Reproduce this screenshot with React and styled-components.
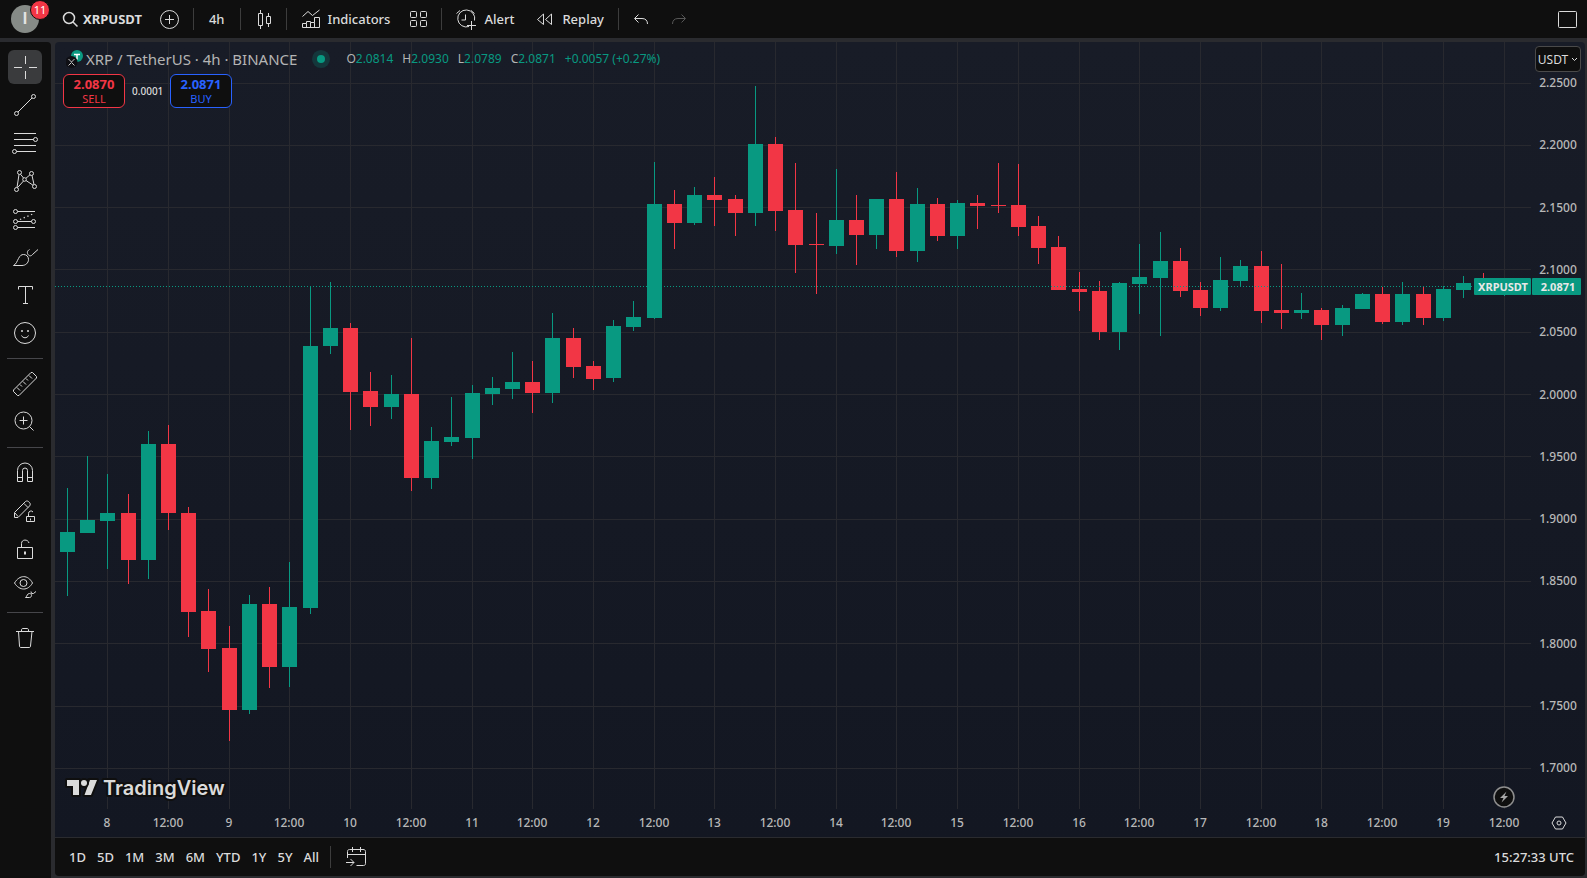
import React, { useLayoutEffect, useRef, useState } from "react";
import styled, { createGlobalStyle } from "styled-components";

const GlobalStyle = createGlobalStyle`
  * { box-sizing: border-box; }
  body {
    margin: 0;
    background: #2a2b2f;
    color: #dbdbdb;
    font-family: "Noto Sans", "Open Sans", sans-serif;
    font-size: 13px;
  }
  button { font: inherit; color: inherit; background: none; border: 0; padding: 0; margin: 0; cursor: pointer; }
`;

const UP = "#089981";
const DOWN = "#f23645";

/* ---------- layout ---------- */

const Page = styled.div`
  display: flex;
  flex-direction: column;
  gap: 4px;
  height: 100vh;
  min-height: 720px;
`;

const TopBar = styled.header`
  display: flex;
  align-items: center;
  flex: none;
  height: 38px;
  background: #0f0f0f;
`;

const Body = styled.div`
  display: flex;
  gap: 4px;
  flex: 1;
  min-height: 0;
`;

const SideBar = styled.nav`
  display: flex;
  flex-direction: column;
  align-items: center;
  flex: none;
  width: 51px;
  padding: 6px 1px 0 0;
  background: #0f0f0f;
  border-top-right-radius: 4px;
`;

const Main = styled.main`
  display: flex;
  flex-direction: column;
  flex: 1;
  min-width: 0;
  margin: 0 2px 2px 0;
  border-radius: 4px;
  overflow: hidden;
`;

const ChartFrame = styled.section`
  display: grid;
  grid-template: minmax(0, 1fr) / minmax(0, 1fr);
  flex: 1;
  min-height: 0;
  background: linear-gradient(#181c27, #131722);
  & > * { grid-area: 1 / 1; }
`;

const BottomBar = styled.footer`
  display: flex;
  align-items: center;
  flex: none;
  height: 39px;
  padding: 0 11px 0 14px;
  background: #0f0f0f;
  border-top: 1px solid #2a2b2f;
`;

/* ---------- shared pieces ---------- */

const Glyph = styled.svg`
  display: block;
  flex: none;
  width: 28px;
  height: 28px;
  fill: none;
  stroke: currentColor;
  stroke-width: 1;
`;

const Icon = ({ children, ...rest }) => (
  <Glyph viewBox="0 0 28 28" aria-hidden="true" {...rest}>{children}</Glyph>
);

const VLine = styled.span`
  flex: none;
  width: 1px;
  height: 22px;
  margin: 0 ${(p) => p.$gap ?? 0}px;
  background: #3d3d3d;
`;

/* ---------- top bar ---------- */

const AvatarButton = styled.button`
  position: relative;
  display: flex;
  flex: none;
  align-items: center;
  justify-content: center;
  width: 28px;
  height: 28px;
  margin: 0 16px 0 11px;
  border-radius: 50%;
  background: #868b87;
  color: #e3e3e3;
  font: 700 16px "Liberation Sans", sans-serif;
`;

const Badge = styled.span`
  position: absolute;
  top: -5px;
  right: -11px;
  min-width: 20px;
  height: 20px;
  padding: 0 2px;
  border: 1px solid #0f0f0f;
  border-radius: 10px;
  background: ${DOWN};
  color: #fff;
  font: 11px/18px "Noto Sans", sans-serif;
  text-align: center;
`;

const BarButton = styled.button`
  display: flex;
  align-items: center;
  flex: none;
  gap: ${(p) => p.$gap || 0}px;
  height: 38px;
  padding: 0 ${(p) => p.$end ?? p.$pad ?? 0}px 0 ${(p) => p.$pad || 0}px;
  color: ${(p) => (p.$dim ? "#575757" : "#dbdbdb")};
  font-weight: ${(p) => (p.$bold ? 700 : 500)};
`;

const Spacer = styled.span`
  flex: 1;
`;

/* ---------- side bar ---------- */

const ToolButton = styled.button`
  display: flex;
  align-items: center;
  justify-content: center;
  flex: none;
  width: 34px;
  height: 34px;
  margin: 2px 0;
  border-radius: 6px;
  background: ${(p) => (p.$active ? "#3a3b3d" : "transparent")};
`;

const ToolRule = styled.hr`
  flex: none;
  width: 36px;
  height: 1px;
  margin: 6px 0;
  border: 0;
  background: #46464a;
`;

/* ---------- chart overlay ---------- */

const Plot = styled.svg`
  display: block;
  width: 100%;
  height: 100%;
  font-family: "Noto Sans", sans-serif;
  font-size: 12px;
`;

const Overlay = styled.div`
  display: flex;
  justify-content: space-between;
  align-items: flex-start;
  z-index: 1;
  padding: 4px 4px 0 8px;
`;

const Legend = styled.div`
  display: flex;
  flex-direction: column;
  gap: 3px;
`;

const LegendRow = styled.div`
  display: flex;
  align-items: center;
  height: 25px;
  padding-left: 3px;
  color: #b4b4b4;
  white-space: nowrap;
`;

const Coins = styled.svg`
  flex: none;
  width: 18px;
  height: 18px;
  margin-right: 2px;
`;

const Title = styled.h1`
  margin: 0;
  font-size: 15px;
  font-weight: 400;
  line-height: 24px;
`;

const Pulse = styled.span`
  flex: none;
  width: 8px;
  height: 8px;
  margin: 0 21px 0 20px;
  border-radius: 50%;
  background: ${UP};
  box-shadow: 0 0 0 5px #14373b;
`;

const Quotes = styled.dl`
  display: flex;
  gap: 9px;
  margin: 0;
  font-size: 12px;
`;

const Quote = styled.div`
  display: flex;
  dt, dd { margin: 0; }
  dd { color: ${UP}; }
`;

const Trade = styled.div`
  display: flex;
  align-items: center;
  gap: 7px;
`;

const TradeButton = styled.button`
  display: flex;
  flex-direction: column;
  align-items: center;
  justify-content: center;
  width: 62px;
  height: 34px;
  border: 1px solid ${(p) => p.$tone};
  border-radius: 6px;
  background: #0f0f0f;
  color: ${(p) => p.$tone};
  font-size: 11px;
  line-height: 14px;
  b { font-size: 13px; line-height: 15px; }
`;

const Spread = styled.span`
  width: 31px;
  font-size: 10px;
  font-weight: 500;
  text-align: center;
`;

const CurrencySelect = styled.button`
  display: flex;
  align-items: center;
  justify-content: center;
  gap: 3px;
  width: 46px;
  height: 26px;
  border: 1px solid #4a4a4a;
  border-radius: 4px;
  background: #0f0f0f;
  font-size: 12px;
  svg { width: 7px; height: 5px; fill: none; stroke: currentColor; }
`;

/* ---------- bottom bar ---------- */

const Ranges = styled.div`
  display: flex;
  gap: 11px;
`;

const RangeButton = styled.button`
  font-weight: 500;
  line-height: 20px;
`;

const Clock = styled(RangeButton)`
  margin-left: auto;
`;

/* ---------- data ---------- */

/* One row per 4h bar: up?, high, body top, body bottom, low.
   Levels are in plot units counted down from LEVEL_TOP. */
const LEVEL_TOP = 42;
const BARS = [
  [1, 488, 532, 552, 596], [1, 456, 520, 533, 533], [1, 474, 513, 521, 569], [0, 494, 513, 560, 584],
  [1, 431, 444, 560, 579], [0, 425, 444, 513, 530], [0, 507, 513, 612, 637], [0, 589, 611, 649, 672],
  [0, 626, 648, 710, 741], [1, 595, 604, 710, 714], [0, 587, 604, 667, 688], [1, 562, 607, 667, 687],
  [1, 286, 346, 608, 614], [1, 282, 328, 346, 354], [0, 323, 328, 392, 430], [0, 372, 391, 407, 426],
  [1, 375, 394, 407, 419], [0, 338, 394, 478, 491], [1, 427, 441, 478, 489], [1, 397, 437, 442, 446],
  [1, 385, 393, 438, 459], [1, 377, 388, 394, 405], [1, 352, 382, 389, 399], [0, 361, 382, 393, 413],
  [1, 313, 338, 393, 403], [0, 328, 338, 367, 378], [0, 361, 366, 379, 390], [1, 320, 326, 378, 382],
  [1, 301, 317, 327, 331], [1, 162, 204, 318, 319], [0, 190, 204, 223, 249], [1, 187, 195, 223, 225],
  [0, 177, 195, 200, 226], [0, 195, 199, 213, 236], [1, 86, 144, 213, 226], [0, 137, 144, 211, 231],
  [0, 163, 210, 245, 273], [0, 213, 244, 245, 294], [1, 169, 220, 246, 254], [0, 195, 220, 235, 265],
  [1, 199, 199, 235, 249], [0, 172, 199, 251, 257], [1, 188, 204, 251, 262], [0, 198, 204, 236, 241],
  [1, 200, 203, 236, 249], [0, 195, 203, 206, 229], [0, 163, 205, 206, 213], [0, 164, 205, 227, 236],
  [0, 216, 226, 248, 264], [0, 236, 247, 290, 290], [0, 272, 289, 292, 311], [0, 281, 291, 332, 340],
  [1, 282, 283, 332, 350], [1, 244, 277, 284, 314], [1, 232, 261, 278, 336], [0, 248, 261, 291, 297],
  [0, 282, 290, 308, 316], [1, 257, 280, 308, 311], [1, 260, 266, 281, 287], [0, 251, 266, 311, 323],
  [0, 264, 310, 313, 329], [1, 293, 310, 313, 319], [0, 308, 310, 325, 340], [1, 305, 308, 325, 336],
  [1, 293, 294, 309, 309], [0, 287, 294, 322, 324], [1, 282, 294, 322, 325], [0, 286, 294, 318, 325],
  [1, 286, 289, 318, 321], [1, 276, 283, 290, 298], [0, 273, 283, 290, 292], [1, 280, 283, 290, 296],
];

const PRICES = Array.from({ length: 12 }, (_, i) => (2.25 - i * 0.05).toFixed(4));
const TIMES = Array.from({ length: 24 }, (_, i) => (i % 2 ? "12:00" : String(8 + i / 2)));

const AXIS_W = 54;
const AXIS_H = 28;

/* ---------- chart ---------- */

function Chart() {
  const ref = useRef(null);
  const [size, setSize] = useState({ w: 1530, h: 795 });

  useLayoutEffect(() => {
    const el = ref.current;
    const read = () => {
      const r = el.getBoundingClientRect();
      setSize({ w: Math.round(r.width), h: Math.round(r.height) });
    };
    read();
    const watcher = new ResizeObserver(read);
    watcher.observe(el);
    return () => watcher.disconnect();
  }, []);

  const plotW = size.w - AXIS_W;
  const plotH = size.h - AXIS_H;
  const kx = plotW / 1476;
  const ky = plotH / 767;
  const x = (i) => Math.floor((12.32 + 20.235 * i) * kx);
  const y = (level) => Math.floor((level - LEVEL_TOP) * ky);
  const bodyHalf = Math.max(1, Math.floor(7 * kx));
  const priceY = (i) => (41 + i * 62.3) * ky;
  const lastY = y(286);

  return (
    <Plot ref={ref} role="img" aria-label="XRPUSDT 4h candlestick chart">
      <g fill="#28292f" shapeRendering="crispEdges">
        {TIMES.map((_, i) => <rect key={i} x={x(2 + i * 3)} y="0" width="1" height={plotH} />)}
        {PRICES.map((p, i) => <rect key={p} x="0" y={Math.floor(priceY(i))} width={plotW} height="1" />)}
      </g>
      <g shapeRendering="crispEdges">
        {BARS.map(([up, high, top, bottom, low], i) => (
          <g key={i} fill={up ? UP : DOWN}>
            <rect x={x(i)} y={y(high)} width="1" height={y(low) - y(high)} />
            <rect x={x(i) - bodyHalf} y={y(top)} width={bodyHalf * 2 + 1} height={Math.max(1, y(bottom) - y(top))} />
          </g>
        ))}
        <line x1="0" x2={plotW} y1={lastY + 0.5} y2={lastY + 0.5} stroke={UP} strokeDasharray="1 2" />
      </g>

      <g fill="#b8b8b8" fontWeight="500" textAnchor="middle">
        {PRICES.map((p, i) => <text key={p} x={plotW + 27} y={Math.round(priceY(i)) + 4}>{p}</text>)}
        {TIMES.map((t, i) => <text key={i} x={x(2 + i * 3)} y={plotH + 18}>{t}</text>)}
      </g>

      <g fill={UP}>
        <rect x={plotW - 57} y={lastY - 8} width="57" height="17" rx="1" />
        <rect x={plotW + 1} y={lastY - 8} width="49" height="17" rx="1" />
      </g>
      <g fill="#e8e8e8" fontWeight="700" fontSize="11" textAnchor="middle">
        <text x={plotW - 28} y={lastY + 5}>XRPUSDT</text>
        <text x={plotW + 27} y={lastY + 5}>2.0871</text>
      </g>

      <g transform={`translate(12 ${plotH - 29})`} fill="#dbdbdb" stroke="#0f0f0f" strokeWidth="4" strokeLinejoin="round">
        <path style={{ paintOrder: "stroke" }} d="M0 0H12V15H6V6H0ZM22 0L30 0L24 15H17.500L23 0Z" />
        <circle style={{ paintOrder: "stroke" }} cx="17" cy="3" r="3" />
        <text x="36" y="15" fontFamily="Inter, sans-serif" fontWeight="600" fontSize="20" style={{ paintOrder: "stroke" }}>TradingView</text>
      </g>

      <g transform={`translate(${x(71)} ${plotH - 12})`}>
        <circle r="10" fill="#0f0f0f" stroke="#8f8f8f" strokeWidth="1.500" />
        <path d="M2.500-5.500L-4 1H-0.500L-2.500 5.500L4-1H0.500Z" fill="#a8a8a8" />
      </g>
      <g transform={`translate(${plotW + 28} ${plotH + 14})`} fill="none" stroke="#dbdbdb">
        <path d="M-3.500-6H3.500L7 0L3.500 6H-3.500L-7 0Z" />
        <circle r="2" />
      </g>
    </Plot>
  );
}

/* ---------- side bar tools ---------- */

const TOOLS = [
  ["Cross", <path d="M14.500 3v8M14.500 18v8M3 14.500h8M18 14.500h8" />],
  ["Trend line", <g><circle cx="22.500" cy="5.500" r="2" /><circle cx="5.500" cy="22.500" r="2" /><path d="M7 21L21 7" /></g>],
  ["Fib retracement", <g><path d="M3 4.500h22M3 10.500h19.500M3 16.500h22M5.500 22.500H25" /><circle cx="24.500" cy="10.500" r="2" /><circle cx="3.500" cy="22.500" r="2" /></g>],
  ["Pattern", <g><circle cx="8.500" cy="5.500" r="2" /><circle cx="20.500" cy="6.500" r="2" /><circle cx="23.500" cy="19.500" r="2" /><circle cx="5.500" cy="22.500" r="2" /><circle cx="13.500" cy="12.500" r="1.800" /><path d="M8 7.500L6 20.500M9.500 7.200L12.500 11M15 11.200L19 7.800M21 8.500L23 17.500M6.500 20.700L12.500 14M15 13.500L22 18.200" /></g>],
  ["Forecast", <g><circle cx="4.500" cy="6.500" r="2" /><circle cx="4.500" cy="16.500" r="2" /><circle cx="22.500" cy="16.500" r="2" /><circle cx="4.500" cy="22.500" r="2" /><path d="M6.500 6.500H24M6.500 16.500h14M6.500 22.500H24" /><path d="M9 14.500L23 8.500" strokeWidth="1.300" strokeDasharray="1.300 2.700" /></g>],
  ["Brush", <path d="M2.500 22.500C5.500 21 6 18 7.500 15.500C9 12.500 10.500 11.500 12.500 11.500C15.500 11.500 17.500 13.500 17.500 16.500C17.500 20 14.500 22.500 11 22.500ZM18.500 6.500C16 8 16 10 17 11.500C18.500 13.500 20.500 13 21.500 11.500L27 6.500" />],
  ["Text", <path d="M7.500 8.500V5.500H21.500V8.500M14.500 5.500V22.500M12 22.500H17" />],
  ["Emoji", <g><circle cx="14" cy="14" r="10.500" /><path d="M10.500 16.500c1.500 3 5.500 3 7 0" /><circle cx="11" cy="12" r="1" fill="currentColor" stroke="none" /><circle cx="17" cy="12" r="1" fill="currentColor" stroke="none" /></g>],
  null,
  ["Measure", <path d="M21.500 2.500L25.500 6.500L25.500 8L8 25.500H6.500L2.500 21.500V20L20 2.500ZM6 17.500l3 3M9 14.500l2 2M12 11.500l3 3M15 8.500l2 2M18 5.500l3 3" />],
  ["Zoom in", <g><circle cx="12.500" cy="12.500" r="8.500" /><path d="M12.500 8.500v8M8.500 12.500h8M18.500 18.500L22.500 22.500" /></g>],
  null,
  ["Magnet", <path d="M6.500 22.500V11.500a7.500 7.500 0 0 1 15 0V22.500H16.500V11.500a2.500 2.500 0 0 0 -5 0V22.500ZM6.500 18.500h5M16.500 18.500h5" />],
  ["Keep drawing", <path d="M3.500 20.500V15.500L14.500 4.500C16 3.500 17 4 18.500 5.500C19.500 6.500 19.500 8 18.500 9L7 20.500ZM4 16L7 19.500M13 6.500L17 10.500M15.500 19.500h8v5h-8ZM17.500 19.500V16.500a2.500 2.500 0 0 1 4.500-1.500M19.500 21.500v2" />],
  ["Lock drawings", <g><path d="M6.500 12.500h15v11h-15ZM10.500 12.500V8.500c0-4.500 6.500-4.500 7.500-.500" /><path d="M14 16.500v3" strokeWidth="2" /></g>],
  ["Hide drawings", <g><path d="M3.500 10C8.500 1.500 17 1.500 21.500 10C17 18 8.500 18 3.500 10Z" /><circle cx="12.500" cy="10" r="3.500" /><path d="M14.500 24.500C16.500 23 16 20.500 18.500 20.500C21.500 20.500 21 24.500 18.500 24.500ZM20 18.500L20.500 20.500H22.500L25 18.500" /></g>],
  null,
  ["Remove", <path d="M5 7.500H23M10.500 7.500V6c0-1 .500-1.500 1.500-1.500h4c1 0 1.500.500 1.500 1.500V7.500M7.500 7.500L8.500 22C8.500 23 9 23.500 10 23.500H18C19 23.500 19.500 23 19.500 22L21 7.500" />],
];

const QUOTES = [["O", "2.0814"], ["H", "2.0930"], ["L", "2.0789"], ["C", "2.0871"]];
const RANGES = ["1D", "5D", "1M", "3M", "6M", "YTD", "1Y", "5Y", "All"];

export default function App() {
  return (
    <Page>
      <GlobalStyle />
      <TopBar>
        <AvatarButton aria-label="Account">I<Badge>11</Badge></AvatarButton>
        <BarButton $bold>
          <Icon><g strokeWidth="1.500"><circle cx="14" cy="13" r="5.500" /><path d="M18 17L22.500 21.500" /></g></Icon>
          XRPUSDT
        </BarButton>
        <BarButton $pad={13} $end={10} aria-label="Compare">
          <Icon><circle cx="14.500" cy="14.500" r="9" /><path d="M14.500 10v9M10 14.500h9" /></Icon>
        </BarButton>
        <VLine />
        <BarButton $pad={15}>4h</BarButton>
        <VLine />
        <BarButton $pad={9} $end={8} aria-label="Candles">
          <Icon><path d="M8.500 8.500h4v12h-4ZM10.500 5v3.500M10.500 20.500V24M16.500 11.500h4v7h-4ZM18.500 8v3.500M18.500 18.500V22" /></Icon>
        </BarButton>
        <VLine />
        <BarButton $pad={10} $gap={3}>
          <Icon><path d="M5.500 11.500L11 6.500L15.500 10.500L22.500 5M5.500 22.500V18.500H9.500V16.500H13.500V17.500H17.500V12.500H22.500V22.500ZM9.500 18.500v4M13.500 17.500v5M17.500 17.500v5" /></Icon>
          Indicators
        </BarButton>
        <BarButton $pad={4} aria-label="Layouts">
          <Icon><rect x="6.500" y="6.500" width="6" height="6" rx="1" /><rect x="16.500" y="6.500" width="6" height="6" rx="1" /><rect x="6.500" y="15.500" width="6" height="6" rx="1" /><rect x="16.500" y="15.500" width="6" height="6" rx="1" /></Icon>
        </BarButton>
        <VLine $gap={5} />
        <BarButton $pad={5} $gap={4}>
          <Icon><path d="M17 21.500A8.500 8.500 0 1 1 22.500 15.500M13.500 9.500V15H9.500M4.500 8.500L8 5.500M19 5.500L22.500 8.500M19.500 16v9M15 20.500h9" /></Icon>
          Alert
        </BarButton>
        <BarButton $pad={12} $gap={3}>
          <Icon><path d="M12.500 9V19.500L6.500 14.500ZM20.500 9V19.500L14.500 14.500Z" strokeLinejoin="round" /></Icon>
          Replay
        </BarButton>
        <VLine $gap={2} />
        <BarButton $pad={6} aria-label="Undo">
          <Icon><path d="M11.500 9.500L7.500 13.500L11.500 17.500M8 13.500H15C18.500 13.500 20.500 15.500 20.500 19" /></Icon>
        </BarButton>
        <BarButton $pad={4} $dim aria-label="Redo">
          <Icon><path d="M16.500 9.500L20.500 13.500L16.500 17.500M20 13.500H13C9.500 13.500 7.500 15.500 7.500 19" /></Icon>
        </BarButton>
        <Spacer />
        <BarButton $pad={6} aria-label="Fullscreen">
          <Icon><rect x="5.500" y="6.500" width="18" height="16" rx="1" /></Icon>
        </BarButton>
      </TopBar>

      <Body>
        <SideBar aria-label="Drawing tools">
          {TOOLS.map((tool, i) =>
            tool
              ? <ToolButton key={i} $active={i === 0} aria-label={tool[0]}><Icon>{tool[1]}</Icon></ToolButton>
              : <ToolRule key={i} />
          )}
        </SideBar>

        <Main>
          <ChartFrame>
            <Chart />
            <Overlay>
              <Legend>
                <LegendRow>
                  <Coins viewBox="0 0 18 18" aria-hidden="true">
                    <circle cx="11" cy="6" r="6" fill="#0b9a82" />
                    <path d="M8 4.500h6M11 4.500v5" stroke="#fff" strokeWidth="1.500" />
                    <circle cx="5.500" cy="12" r="6" fill="#0f0f14" />
                    <path d="M2.500 9L5.500 12L8.500 9M2.500 15.500L5.500 12.500L8.500 15.500" fill="none" stroke="#c8c8c8" />
                  </Coins>
                  <Title>XRP / TetherUS · 4h · BINANCE</Title>
                  <Pulse />
                  <Quotes>
                    {QUOTES.map(([k, v]) => <Quote key={k}><dt>{k}</dt><dd>{v}</dd></Quote>)}
                    <Quote><dd>+0.0057 (+0.27%)</dd></Quote>
                  </Quotes>
                </LegendRow>
                <Trade>
                  <TradeButton $tone={DOWN}><b>2.0870</b>SELL</TradeButton>
                  <Spread>0.0001</Spread>
                  <TradeButton $tone="#2962ff"><b>2.0871</b>BUY</TradeButton>
                </Trade>
              </Legend>
              <CurrencySelect>
                USDT
                <svg viewBox="0 0 7 5" aria-hidden="true"><path d="M1 1L3.500 3.500L6 1" /></svg>
              </CurrencySelect>
            </Overlay>
          </ChartFrame>

          <BottomBar>
            <Ranges>
              {RANGES.map((r) => <RangeButton key={r}>{r}</RangeButton>)}
            </Ranges>
            <VLine $gap={11} />
            <BarButton aria-label="Go to date">
              <Icon><path d="M5.500 15V8.500C5.500 7 6.500 6.500 7.500 6.500H21C22.500 6.500 23.500 7 23.500 8.500V20.500C23.500 22 22.500 22.500 21.500 22.500H14.500M5.500 11.500H23.500M10.500 4v5M18.500 4v5M4 19.500h8M8.500 16L12 19.500L8.500 23" /></Icon>
            </BarButton>
            <Clock>15:27:33 UTC</Clock>
          </BottomBar>
        </Main>
      </Body>
    </Page>
  );
}
